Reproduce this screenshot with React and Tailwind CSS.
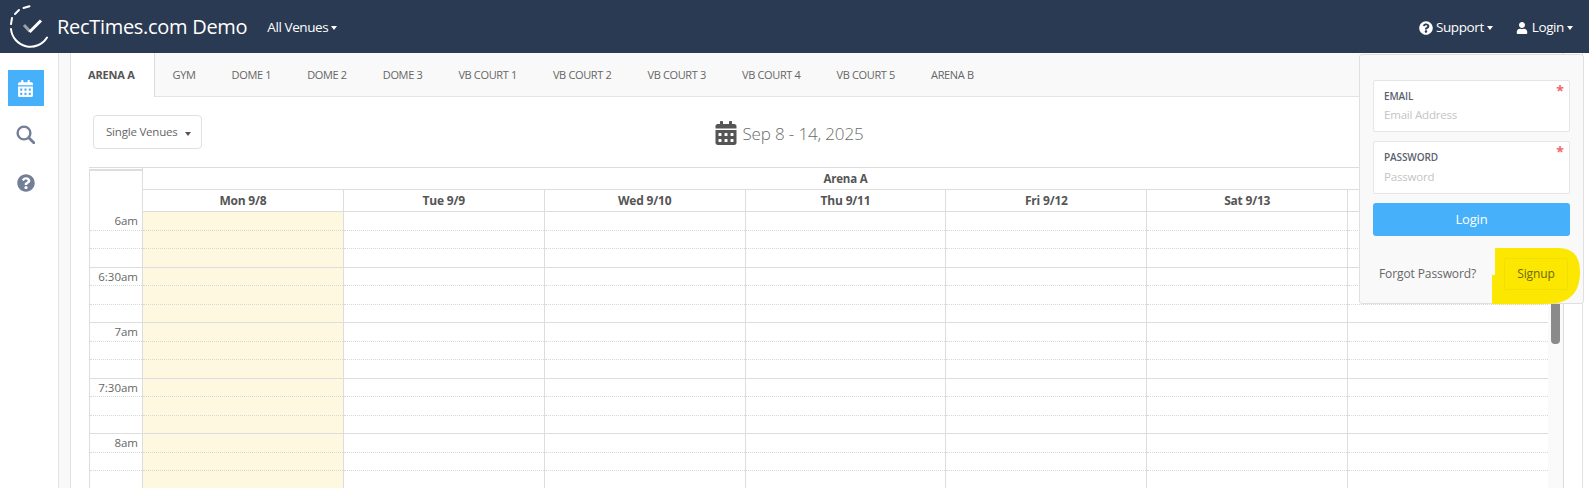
import React from "react";
import { FaCalendarAlt, FaQuestionCircle, FaUser } from "react-icons/fa";

const tabs = ["ARENA A", "GYM", "DOME 1", "DOME 2", "DOME 3", "VB COURT 1", "VB COURT 2", "VB COURT 3", "VB COURT 4", "VB COURT 5", "ARENA B"];
const days = ["Mon 9/8", "Tue 9/9", "Wed 9/10", "Thu 9/11", "Fri 9/12", "Sat 9/13", "Sun 9/14"];
const times = ["6am", "6:30am", "7am", "7:30am", "8am"];

function Caret({ className = "" }) {
  return <span className={`inline-block w-0 h-0 border-x-[3.5px] border-x-transparent border-t-[4px] ${className}`} />;
}

function Logo() {
  return (
    <svg width="42" height="44" viewBox="0 0 42 44" className="shrink-0" fill="none" stroke="#fff" strokeWidth="2" strokeLinecap="round">
      <path d="M1 24 A19.5 19.5 0 0 0 37 32.5" />
      <path d="M1 19 L2 13" />
      <path d="M5 9 L9 5" />
      <path d="M13.5 3 L19.5 1.3" />
      <path d="M14 20 L20 26.5" stroke="#9aa0aa" strokeWidth="3" strokeLinecap="butt" />
      <path d="M19.5 27 L31 15.5" strokeWidth="3" strokeLinecap="butt" />
    </svg>
  );
}

function SearchIcon() {
  return (
    <svg width="19" height="19" viewBox="0 0 19 19" fill="none" stroke="#737f97" className="mt-[19px]">
      <circle cx="8" cy="8" r="6.4" strokeWidth="2.4" />
      <path d="M12.8 12.8 L17.8 17.8" strokeWidth="2.8" strokeLinecap="round" />
    </svg>
  );
}

function Field({ label, placeholder, className = "", gapClass = "mt-[4px]" }) {
  return (
    <div className={`relative bg-white border border-[#e6e6e6] rounded-[2px] pl-[10px] pt-[8px] ${className}`}>
      <div className="text-[10px] leading-[14px] font-semibold text-[#5a6270] tracking-[-0.1px]">{label}</div>
      <div className={`text-[11.5px] leading-[16px] ${gapClass} text-[#c4c4c4] tracking-[-0.2px]`}>{placeholder}</div>
      <span className="absolute right-[5px] top-[3px] text-[14px] leading-[14px] font-bold text-[#f4646c]">*</span>
    </div>
  );
}

function DayRow({ label }) {
  return (
    <>
      <div className="flex flex-col border-l border-[#dddddd] bg-white">
        <div className="h-[18.5px] border-b border-dotted border-[#d8d8d8] text-right pr-[4px] text-[11.5px] leading-[18px] text-[#666666]">{label}</div>
        <div className="h-[18.5px] border-b border-dotted border-[#d8d8d8]" />
        <div className="h-[18.5px] border-b border-[#dddddd]" />
      </div>
      {days.map((d, i) => (
        <div key={d} className={`flex flex-col border-l border-[#dddddd] ${i === 0 ? "bg-[#fff8e1]" : "bg-white"}`}>
          <div className="h-[18.5px] border-b border-dotted border-[#d8d8d8]" />
          <div className="h-[18.5px] border-b border-dotted border-[#d8d8d8]" />
          <div className="h-[18.5px] border-b border-[#dddddd]" />
        </div>
      ))}
    </>
  );
}

export default function App() {
  return (
    <div className="relative h-[488px] w-[1589px] overflow-hidden bg-white flex flex-col" style={{ fontFamily: '"Open Sans", "Noto Sans", sans-serif' }}>
      <header className="h-[53px] shrink-0 bg-[#2a3a52] flex items-center pl-[10px] pr-[16px] text-white">
        <Logo />
        <span className="ml-[5px] text-[20px] tracking-[-0.3px] leading-none">RecTimes.com Demo</span>
        <span className="ml-[20px] mt-[2px] text-[13.5px] tracking-[-0.4px] flex items-center">All Venues<Caret className="ml-[3px] border-t-white" /></span>
        <div className="ml-auto mt-[2px] flex items-center text-[13.5px] tracking-[-0.4px]">
          <FaQuestionCircle className="text-[14px] mr-[3px]" />
          Support<Caret className="ml-[3px] border-t-white" />
          <FaUser className="text-[12px] ml-[23px] mr-[4px]" />
          Login<Caret className="ml-[3px] border-t-white" />
        </div>
      </header>

      <div className="flex flex-1 min-h-0">
        <aside className="w-[59px] shrink-0 border-r border-[#e4e4e4] flex flex-col items-center pt-[17px] pr-[7px]">
          <div className="w-[36px] h-[36px] bg-[#47b0fb] flex items-center justify-center">
            <FaCalendarAlt className="text-white text-[17px]" />
          </div>
          <SearchIcon />
          <FaQuestionCircle className="mt-[30px] text-[18px] text-[#737f97]" />
        </aside>
        <div className="w-[11px] shrink-0 bg-[#f9f9f9]" />
        <main className="w-[1513px] shrink-0 border-x border-[#e0e0e0] flex">
          <div className="w-[1493px] shrink-0 border-r border-[#dcdcdc] flex flex-col">
            <nav className="h-[44px] shrink-0 flex bg-[#f9f9f9] border-b border-[#e4e4e4]">
              {tabs.map((t, i) => (
                <div
                  key={t}
                  className={
                    i === 0
                      ? "h-[44px] pt-[1px] pl-[17px] pr-[19px] bg-white border-r border-[#dcdcdc] flex items-center text-[11px] font-bold text-[#555555] tracking-[-0.2px]"
                      : "pt-[1px] px-[18px] flex items-center text-[11px] text-[#666666] tracking-[-0.35px]"
                  }
                >
                  {t}
                </div>
              ))}
            </nav>
            <div className="flex flex-1 min-h-0">
              <div className="w-[1477px] shrink-0 pl-[18px] overflow-hidden">
                <div className="relative h-[70px]">
                  <div className="absolute left-[4px] top-[18px] w-[109px] h-[34px] border border-[#e0e0e0] rounded-[4px] flex items-center pl-[12px] text-[11.5px] text-[#666666] tracking-[-0.2px]">
                    Single Venues
                    <Caret className="ml-[7px] mt-[3px] border-t-[#555555]" />
                  </div>
                  <div className="flex items-center justify-center h-[70px] pt-[3px] pr-[59px] text-[#6b6b6b]">
                    <FaCalendarAlt className="text-[24px] text-[#555555] mr-[4px] -translate-y-[1px]" />
                    <span className="text-[17px] font-light tracking-[-0.15px]">Sep 8 - 14, 2025</span>
                  </div>
                </div>
                <div className="grid grid-cols-[53px_repeat(7,minmax(0,1fr))] w-[1459px] border-t border-[#dddddd]">
                  <div className="row-span-2 border-l border-t-2 border-[#dddddd] mt-[1px] border-b-0" />
                  <div className="col-span-7 h-[22px] border-l border-b border-[#dddddd] flex items-center justify-center text-[11.5px] font-bold text-[#555555] tracking-[-0.2px]">Arena A</div>
                  {days.map((d) => (
                    <div key={d} className="h-[22px] border-l border-b border-[#dddddd] flex items-center justify-center text-[12px] font-bold text-[#555555] tracking-[-0.2px]">{d}</div>
                  ))}
                  {times.map((t) => (
                    <DayRow key={t} label={t} />
                  ))}
                </div>
              </div>
              <div className="w-[15px] shrink-0 bg-[#fafafa] px-[3px]">
                <div className="h-[247px] bg-[#8a8a8a] rounded-b-[4px]" />
              </div>
            </div>
          </div>
        </main>
      </div>

      <div className="absolute left-[1359px] top-[54px] w-[225px] h-[250px] bg-[#f9f9f9] border border-[#e0e0e0] rounded-[3px] pt-[25px] px-[13px]">
        <Field label="EMAIL" placeholder="Email Address" className="h-[52px]" />
        <Field label="PASSWORD" placeholder="Password" className="h-[53px] mt-[9px]" gapClass="mt-[5px]" />
        <div className="h-[33px] mt-[9px] bg-[#47b0fb] rounded-[3px] flex items-center justify-center text-white text-[13px] tracking-[-0.2px]">Login</div>
        <div className="relative flex items-center mt-[22px] h-[32px]">
          <svg className="absolute left-[119px] top-[-10px]" width="88" height="57" viewBox="0 0 88 57">
            <path d="M3 0 H66 Q88 0 88 24 Q88 50 66 55 Q52 57 0 56 V27 H3 Z" fill="#fbe700" />
          </svg>
          <span className="relative pl-[6px] text-[12px] text-[#666666] tracking-[-0.1px]">Forgot Password?</span>
          <span className="absolute left-[131px] top-0 w-[64px] h-[32px] border border-[#efe000] rounded-[2px] flex items-center justify-center text-[12px] text-[#6b6a10] tracking-[-0.1px]">Signup</span>
        </div>
      </div>
    </div>
  );
}
